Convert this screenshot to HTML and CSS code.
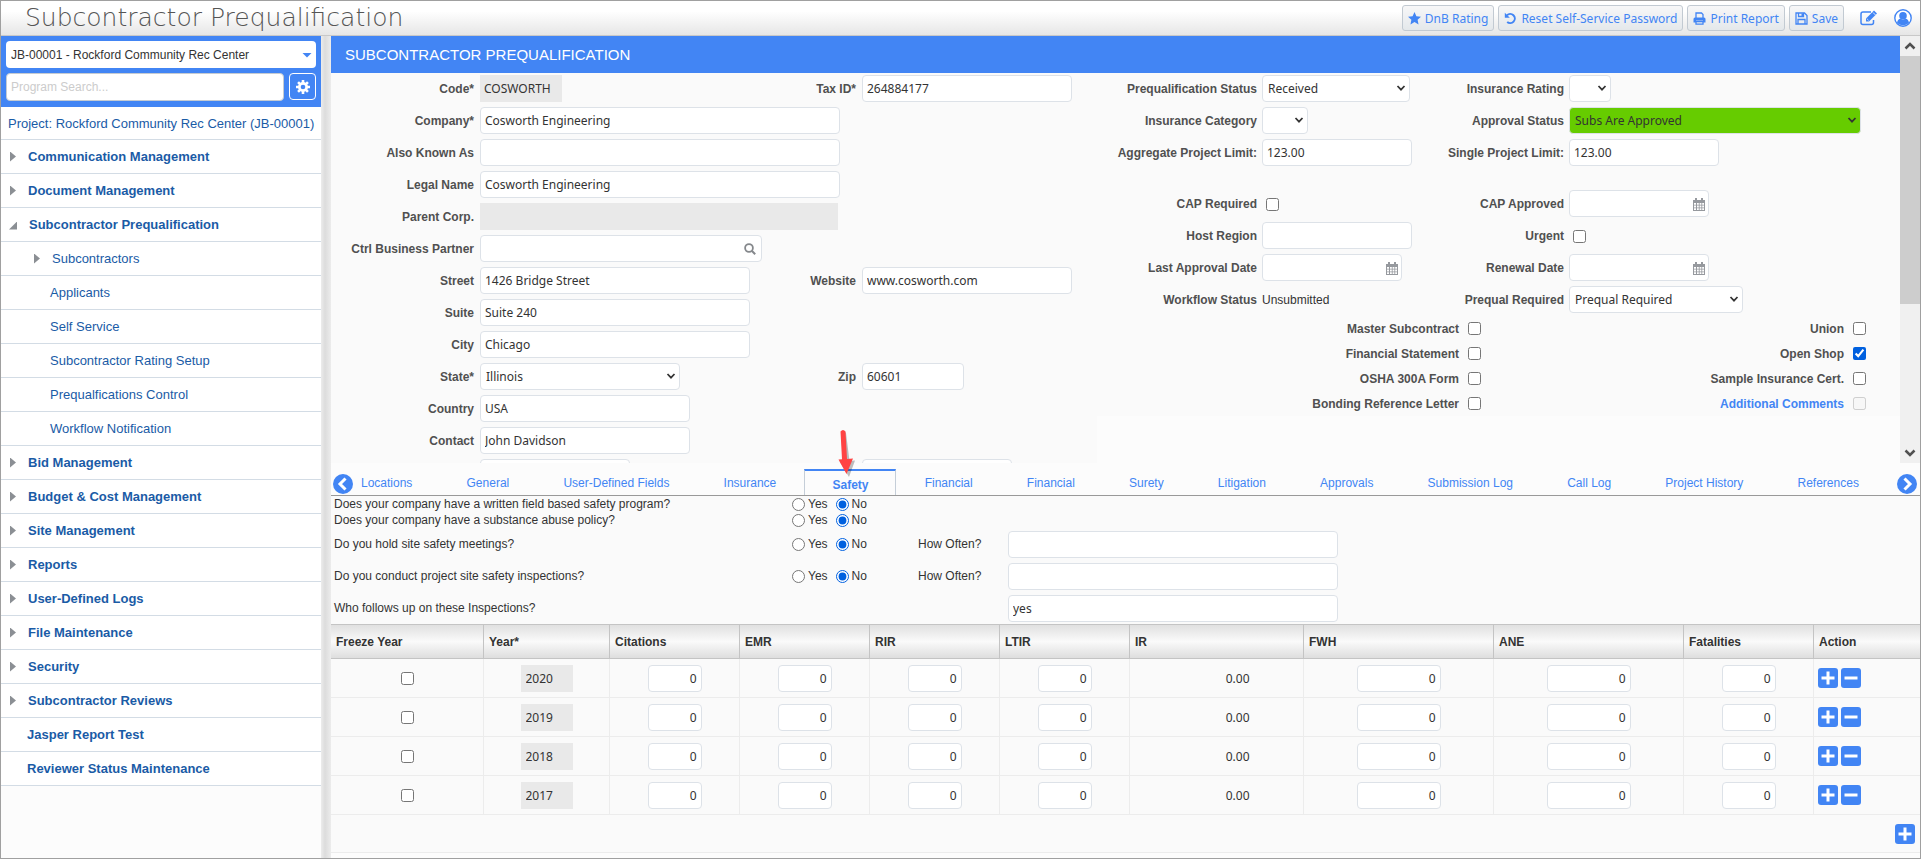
FILE: index.html
```html
<!DOCTYPE html>
<html lang="en">
<head>
<meta charset="utf-8">
<title>Subcontractor Prequalification</title>
<link rel="stylesheet" href="styles.css">
</head>
<body>
<svg class="sprite" aria-hidden="true">
  <symbol id="chev" viewBox="0 0 10 10"><path d="M1.5 3l3.500 3.700L8.500 3" fill="none" stroke="#333" stroke-width="1.700"/></symbol>
  <symbol id="cal" viewBox="0 0 12 13"><path d="M0 2h12v11H0z" fill="#96999e"/><path d="M2 0h2v3H2zM8 0h2v3H8z" fill="#96999e"/><path d="M1 5h2v1.800H1zM4 5h1.800v1.800H4zM6.600 5h1.800v1.800H6.600zM9.200 5H11v1.800H9.200zM1 7.600h2v1.800H1zM4 7.600h1.800v1.800H4zM6.600 7.600h1.800v1.800H6.600zM9.200 7.600H11v1.800H9.200zM1 10.200h2V12H1zM4 10.200h1.800V12H4zM6.600 10.200h1.800V12H6.600zM9.200 10.200H11V12H9.200z" fill="#fff"/></symbol>
  <symbol id="plus" viewBox="0 0 20 20"><rect width="20" height="20" rx="3" fill="#4285f4"/><path d="M10 3.500v13M3.500 10h13" stroke="#fff" stroke-width="3"/></symbol>
  <symbol id="minus" viewBox="0 0 20 20"><rect width="20" height="20" rx="3" fill="#4285f4"/><path d="M3.500 10h13" stroke="#fff" stroke-width="3"/></symbol>
</svg>
<div class="app">
  <header class="topbar">
    <h1 class="brand">Subcontractor Prequalification</h1>
    <div class="actions">
      <button class="btn"><svg width="13" height="13" viewBox="0 0 13 13"><path d="M6.500 0l1.900 4.200 4.600.5-3.400 3.100.95 4.600L6.500 10.100l-4.050 2.300.95-4.600L0 4.700l4.600-.5z" fill="#4285f4"/></svg>DnB Rating</button>
      <button class="btn"><svg width="13" height="13" viewBox="0 0 13 13"><path d="M3 3.200A4.600 4.600 0 1 1 3.200 10" fill="none" stroke="#4285f4" stroke-width="2"/><path d="M.8.800v5h5z" fill="#4285f4"/></svg>Reset Self-Service Password</button>
      <button class="btn"><svg width="13" height="13" viewBox="0 0 13 13"><path d="M3 6V1h5.500L10 2.500V6M3 9.500h7v2.700H3z" fill="none" stroke="#4285f4" stroke-width="1.300"/><path d="M.5 7q0-1.500 1.500-1.500h9q1.500 0 1.500 1.500v3.500H10v-2H3v2H.5z" fill="#4285f4"/></svg>Print Report</button>
      <button class="btn"><svg width="13" height="13" viewBox="0 0 13 13"><path d="M1 1h8.500L12 3.500V12H1zM3.500 1v3.500h5V1M3 12V7.500h7V12" fill="none" stroke="#4285f4" stroke-width="1.300"/><path d="M6.500 1.500h1.500v2.500H6.500z" fill="#4285f4"/></svg>Save</button>
      <button class="icon-btn edit" aria-label="Edit"><svg width="18" height="16" viewBox="0 0 18 16"><path d="M11 2H3Q1 2 1 4v8.500q0 2 2 2h8.500q2 0 2-2V10" fill="none" stroke="#4285f4" stroke-width="1.500"/><path d="M6 8.500L14 .5l3 3-8 8H6z" fill="#4285f4"/><path d="M7.200 9l1.300 1.300M13 2.500l2.500 2.500" stroke="#fff" stroke-width=".8"/></svg></button>
      <button class="icon-btn" aria-label="Account"><svg width="18" height="18" viewBox="0 0 18 18"><circle cx="9" cy="9" r="8.200" fill="#fff" stroke="#4285f4" stroke-width="1.400"/><circle cx="9" cy="6.800" r="3.800" fill="#4285f4"/><path d="M3 14q.5-4 3.500-4.500Q9 11.500 11.500 9.500 14.500 10 15 14q-6 4.500-12 0z" fill="#4285f4"/></svg></button>
    </div>
  </header>

  <div class="body">
    <aside class="side">
      <div class="side-head">
        <div class="pick job"><select aria-label="Job"><option>JB-00001 - Rockford Community Rec Center</option></select><svg width="10" height="6" viewBox="0 0 10 6"><path d="M.5 1h9L5 5.500z" fill="#4285f4"/></svg></div>
        <div class="search-row">
          <input class="search" type="text" placeholder="Program Search..." aria-label="Program Search">
          <button class="gear" aria-label="Settings"><svg width="14" height="14" viewBox="0 0 14 14"><g fill="#fff"><circle cx="7" cy="7" r="5"/><path d="M5.700 0h2.600v14H5.700zM0 5.700h14v2.600H0z"/><path d="M5.700 0h2.600v14H5.700zM0 5.700h14v2.600H0z" transform="rotate(45 7 7)"/></g><circle cx="7" cy="7" r="2.300" fill="#4285f4"/></svg></button>
        </div>
      </div>
      <nav class="menu">
        <a class="project" href="#">Project: Rockford Community Rec Center (JB-00001)</a>
        <a class="item" href="#"><i class="tri"></i>Communication Management</a>
        <a class="item" href="#"><i class="tri"></i>Document Management</a>
        <a class="item" href="#"><i class="tri open"></i>Subcontractor Prequalification</a>
        <a class="item sub" href="#"><i class="tri"></i>Subcontractors</a>
        <a class="item sub" href="#"><i class="none"></i>Applicants</a>
        <a class="item sub" href="#"><i class="none"></i>Self Service</a>
        <a class="item sub" href="#"><i class="none"></i>Subcontractor Rating Setup</a>
        <a class="item sub" href="#"><i class="none"></i>Prequalfications Control</a>
        <a class="item sub" href="#"><i class="none"></i>Workflow Notification</a>
        <a class="item" href="#"><i class="tri"></i>Bid Management</a>
        <a class="item" href="#"><i class="tri"></i>Budget &amp; Cost Management</a>
        <a class="item" href="#"><i class="tri"></i>Site Management</a>
        <a class="item" href="#"><i class="tri"></i>Reports</a>
        <a class="item" href="#"><i class="tri"></i>User-Defined Logs</a>
        <a class="item" href="#"><i class="tri"></i>File Maintenance</a>
        <a class="item" href="#"><i class="tri"></i>Security</a>
        <a class="item" href="#"><i class="tri"></i>Subcontractor Reviews</a>
        <a class="item" href="#"><i class="none"></i>Jasper Report Test</a>
        <a class="item" href="#"><i class="none"></i>Reviewer Status Maintenance</a>
      </nav>
    </aside>
    <div class="splitter"></div>

    <main class="main">
      <div class="upper">
        <div class="upper-content">
          <h2 class="title">SUBCONTRACTOR PREQUALIFICATION</h2>
          <div class="forms">
            <div class="form left">
              <label for="code">Code*</label><div><input id="code" class="ro w-code" value="COSWORTH" readonly></div>
              <label for="tax">Tax ID*</label><div><input id="tax" class="w210" value="264884177"></div>
              <label for="company">Company*</label><div class="wide"><input id="company" class="w360" value="Cosworth Engineering"></div>
              <label for="aka">Also Known As</label><div class="wide"><input id="aka" class="w360"></div>
              <label for="legal">Legal Name</label><div class="wide"><input id="legal" class="w360" value="Cosworth Engineering"></div>
              <label for="parent">Parent Corp.</label><div class="wide"><input id="parent" class="ro w358" readonly></div>
              <label for="partner">Ctrl Business Partner</label><div class="wide"><span class="pick find w282"><input id="partner"><svg width="12" height="12" viewBox="0 0 12 12"><circle cx="5" cy="5" r="3.900" fill="none" stroke="#85888c" stroke-width="1.800"/><path d="M8 8l3.200 3.200" stroke="#85888c" stroke-width="2"/></svg></span></div>
              <label for="street">Street</label><div><input id="street" class="w270" value="1426 Bridge Street"></div>
              <label for="web">Website</label><div><input id="web" class="w210" value="www.cosworth.com"></div>
              <label for="suite">Suite</label><div class="wide"><input id="suite" class="w270" value="Suite 240"></div>
              <label for="city">City</label><div class="wide"><input id="city" class="w270" value="Chicago"></div>
              <label for="state">State*</label><div><span class="pick w200"><select id="state"><option>Illinois</option></select><svg width="10" height="10"><use href="#chev"/></svg></span></div>
              <label for="zip">Zip</label><div><input id="zip" class="w102" value="60601"></div>
              <label for="country">Country</label><div class="wide"><input id="country" class="w210" value="USA"></div>
              <label for="contact">Contact</label><div class="wide"><input id="contact" class="w210" value="John Davidson"></div>
              <span></span><div><input class="w150" aria-label="Phone"></div>
              <span></span><div><input class="w150" aria-label="Fax"></div>
            </div>

            <div class="right">
              <div class="form status">
                <label for="pstat">Prequalification Status</label><div><span class="pick w148"><select id="pstat"><option>Received</option></select><svg width="10" height="10"><use href="#chev"/></svg></span></div>
                <label for="irate">Insurance Rating</label><div><span class="pick w42"><select id="irate"><option></option></select><svg width="10" height="10"><use href="#chev"/></svg></span></div>
                <label for="icat">Insurance Category</label><div><span class="pick w46"><select id="icat"><option></option></select><svg width="10" height="10"><use href="#chev"/></svg></span></div>
                <label for="astat">Approval Status</label><div><span class="pick green w292"><select id="astat"><option>Subs Are Approved</option></select><svg width="10" height="10"><use href="#chev"/></svg></span></div>
                <label for="agg">Aggregate Project Limit:</label><div><input id="agg" class="w150" value="123.00"></div>
                <label for="single">Single Project Limit:</label><div><input id="single" class="w150" value="123.00"></div>
              </div>
              <div class="form status second">
                <label for="capr">CAP Required</label><div><input id="capr" type="checkbox"></div>
                <label for="capa">CAP Approved</label><div><span class="pick w140"><input id="capa"><svg width="12" height="13"><use href="#cal"/></svg></span></div>
                <label for="host">Host Region</label><div><input id="host" class="w150"></div>
                <label for="urgent">Urgent</label><div><input id="urgent" type="checkbox"></div>
                <label for="lad">Last Approval Date</label><div><span class="pick w140"><input id="lad"><svg width="12" height="13"><use href="#cal"/></svg></span></div>
                <label for="ren">Renewal Date</label><div><span class="pick w140"><input id="ren"><svg width="12" height="13"><use href="#cal"/></svg></span></div>
                <label>Workflow Status</label><div><span class="plain">Unsubmitted</span></div>
                <label for="preq">Prequal Required</label><div><span class="pick w174"><select id="preq"><option>Prequal Required</option></select><svg width="10" height="10"><use href="#chev"/></svg></span></div>
              </div>
              <div class="form checks">
                <label for="c1">Master Subcontract</label><input id="c1" type="checkbox">
                <label for="c2">Union</label><input id="c2" type="checkbox">
                <label for="c3">Financial Statement</label><input id="c3" type="checkbox">
                <label for="c4">Open Shop</label><input id="c4" type="checkbox" checked>
                <label for="c5">OSHA 300A Form</label><input id="c5" type="checkbox">
                <label for="c6">Sample Insurance Cert.</label><input id="c6" type="checkbox">
                <label for="c7">Bonding Reference Letter</label><input id="c7" type="checkbox">
                <label for="c8"><a href="#">Additional Comments</a></label><input id="c8" type="checkbox" disabled>
              </div>
            </div>
          </div>
        </div>
        <div class="scroll">
          <svg width="20" height="20" viewBox="0 0 20 20"><path d="M5.500 12.500L10 8l4.500 4.500" fill="none" stroke="#505050" stroke-width="2.500"/></svg>
          <div class="track"><div class="thumb"></div></div>
          <svg width="20" height="20" viewBox="0 0 20 20"><path d="M5.500 7.500L10 12l4.500-4.500" fill="none" stroke="#505050" stroke-width="2.500"/></svg>
        </div>
      </div>

      <div class="tabs">
        <button class="round" aria-label="Previous tabs"><svg width="20" height="20" viewBox="0 0 20 20"><circle cx="10" cy="10" r="10" fill="#4285f4"/><path d="M12.500 4.500L7 10l5.500 5.500" fill="none" stroke="#fff" stroke-width="3"/></svg></button>
        <div class="tablist">
          <a href="#">Locations</a><a href="#">General</a><a href="#">User-Defined Fields</a><a href="#">Insurance</a>
          <a href="#" class="active">Safety<svg class="pointer" width="26" height="54" viewBox="0 0 26 54"><path d="M7 3q3-2.500 5 0l3.500 28 5.500-.5L15 47 5.500 31.500 9 31z" transform="translate(1 2)" fill="#000" opacity=".25"/><path d="M7.500 3.500q2.500-3 5 0l1.500 27.500 6-.5L13.500 46 5.500 31.500l3.500-.3z" fill="#ff4343"/></svg></a>
          <a href="#">Financial</a><a href="#">Financial</a><a href="#">Surety</a><a href="#">Litigation</a><a href="#">Approvals</a><a href="#">Submission Log</a><a href="#">Call Log</a><a href="#">Project History</a><a href="#">References</a>
        </div>
        <button class="round" aria-label="Next tabs"><svg width="20" height="20" viewBox="0 0 20 20"><circle cx="10" cy="10" r="10" fill="#4285f4"/><path d="M7.500 4.500L13 10l-5.500 5.500" fill="none" stroke="#fff" stroke-width="3"/></svg></button>
      </div>

      <section class="questions">
        <div class="q"><span>Does your company have a written field based safety program?</span><span class="yn"><label><input type="radio" name="q1">Yes</label><label><input type="radio" name="q1" checked>No</label></span></div>
        <div class="q"><span>Does your company have a substance abuse policy?</span><span class="yn"><label><input type="radio" name="q2">Yes</label><label><input type="radio" name="q2" checked>No</label></span></div>
        <div class="q tall"><span>Do you hold site safety meetings?</span><span class="yn"><label><input type="radio" name="q3">Yes</label><label><input type="radio" name="q3" checked>No</label></span><label for="h1">How Often?</label><input id="h1" class="w330"></div>
        <div class="q tall"><span>Do you conduct project site safety inspections?</span><span class="yn"><label><input type="radio" name="q4">Yes</label><label><input type="radio" name="q4" checked>No</label></span><label for="h2">How Often?</label><input id="h2" class="w330"></div>
        <div class="q tall"><label for="who">Who follows up on these Inspections?</label><span></span><span></span><input id="who" class="w330" value="yes"></div>
      </section>

      <table class="grid">
        <colgroup><col class="c153"><col class="c126"><col class="c130"><col class="c130"><col class="c130"><col class="c130"><col class="c174"><col class="c190"><col class="c190"><col class="c130"><col></colgroup>
        <thead><tr><th>Freeze Year</th><th>Year*</th><th>Citations</th><th>EMR</th><th>RIR</th><th>LTIR</th><th>IR</th><th>FWH</th><th>ANE</th><th>Fatalities</th><th>Action</th></tr></thead>
        <tbody>
          <tr><td><input type="checkbox" aria-label="Freeze 2020"></td><td><input class="ro yr" value="2020" readonly aria-label="Year"></td><td><input class="n" value="0" aria-label="Citations"></td><td><input class="n" value="0" aria-label="EMR"></td><td><input class="n" value="0" aria-label="RIR"></td><td><input class="n" value="0" aria-label="LTIR"></td><td><span class="ir">0.00</span></td><td><input class="n big" value="0" aria-label="FWH"></td><td><input class="n big" value="0" aria-label="ANE"></td><td><input class="n" value="0" aria-label="Fatalities"></td><td class="act"><button aria-label="Add row"><svg width="20" height="20"><use href="#plus"/></svg></button><button aria-label="Remove row"><svg width="20" height="20"><use href="#minus"/></svg></button></td></tr>
          <tr><td><input type="checkbox" aria-label="Freeze 2019"></td><td><input class="ro yr" value="2019" readonly aria-label="Year"></td><td><input class="n" value="0" aria-label="Citations"></td><td><input class="n" value="0" aria-label="EMR"></td><td><input class="n" value="0" aria-label="RIR"></td><td><input class="n" value="0" aria-label="LTIR"></td><td><span class="ir">0.00</span></td><td><input class="n big" value="0" aria-label="FWH"></td><td><input class="n big" value="0" aria-label="ANE"></td><td><input class="n" value="0" aria-label="Fatalities"></td><td class="act"><button aria-label="Add row"><svg width="20" height="20"><use href="#plus"/></svg></button><button aria-label="Remove row"><svg width="20" height="20"><use href="#minus"/></svg></button></td></tr>
          <tr><td><input type="checkbox" aria-label="Freeze 2018"></td><td><input class="ro yr" value="2018" readonly aria-label="Year"></td><td><input class="n" value="0" aria-label="Citations"></td><td><input class="n" value="0" aria-label="EMR"></td><td><input class="n" value="0" aria-label="RIR"></td><td><input class="n" value="0" aria-label="LTIR"></td><td><span class="ir">0.00</span></td><td><input class="n big" value="0" aria-label="FWH"></td><td><input class="n big" value="0" aria-label="ANE"></td><td><input class="n" value="0" aria-label="Fatalities"></td><td class="act"><button aria-label="Add row"><svg width="20" height="20"><use href="#plus"/></svg></button><button aria-label="Remove row"><svg width="20" height="20"><use href="#minus"/></svg></button></td></tr>
          <tr><td><input type="checkbox" aria-label="Freeze 2017"></td><td><input class="ro yr" value="2017" readonly aria-label="Year"></td><td><input class="n" value="0" aria-label="Citations"></td><td><input class="n" value="0" aria-label="EMR"></td><td><input class="n" value="0" aria-label="RIR"></td><td><input class="n" value="0" aria-label="LTIR"></td><td><span class="ir">0.00</span></td><td><input class="n big" value="0" aria-label="FWH"></td><td><input class="n big" value="0" aria-label="ANE"></td><td><input class="n" value="0" aria-label="Fatalities"></td><td class="act"><button aria-label="Add row"><svg width="20" height="20"><use href="#plus"/></svg></button><button aria-label="Remove row"><svg width="20" height="20"><use href="#minus"/></svg></button></td></tr>
        </tbody>
      </table>
      <div class="grid-foot"><button aria-label="Add year"><svg width="20" height="20"><use href="#plus"/></svg></button></div>
    </main>
  </div>
</div>
</body>
</html>
```

FILE: styles.css
```css
* { box-sizing: border-box; }
body { margin: 0; font-family: "Liberation Sans", Arial, sans-serif; font-size: 12px; color: #333; }
a { text-decoration: none; color: #4285f4; }
button { margin: 0; padding: 0; border: 0; background: none; font: inherit; }
svg { display: block; flex: none; }
.sprite { position: absolute; width: 0; height: 0; }

.app { display: flex; flex-direction: column; min-height: 100vh; border: 1px solid #a0a0a0; background: #fcfcfc; }

/* top bar */
.topbar { display: flex; align-items: center; justify-content: space-between; height: 35px; padding: 0 8px 0 24px; border-bottom: 1px solid #c8c8c8; background: linear-gradient(#fff 30%, #e6e6e6); }
.brand { margin: 0; font-family: "DejaVu Sans", sans-serif; font-weight: 200; font-size: 25px; line-height: 32px; color: #555; }
.actions { display: flex; align-items: center; gap: 4px; }
.btn { display: flex; align-items: center; gap: 4px; height: 26px; padding: 0 5px; border: 1px solid #c2cad2; border-radius: 3px; background: linear-gradient(#f7f7f8, #e4e8eb); font-family: "Noto Sans", sans-serif; font-size: 12px; color: #4285f4; white-space: nowrap; }
.icon-btn { margin-left: 12px; }

/* shared fields */
input:not([type]), input[type="text"], select { height: 27px; padding: 0 4px; border: 1px solid #dde2e8; border-radius: 4px; background: #fff; font-family: "Noto Sans", sans-serif; font-size: 12px; color: #333; outline: 0; }
select { appearance: none; padding: 0 5px; }
input[type="checkbox"], input[type="radio"] { margin: 0; width: 13px; height: 13px; accent-color: #0060df; flex: none; }
input.ro { border: 0; border-radius: 0; background: #e9e9e9; }
.pick { position: relative; display: block; }
.pick input:not([type]), .pick select { width: 100%; display: block; }
.pick svg { position: absolute; right: 4px; top: 50%; margin-top: -6px; pointer-events: none; }
.find svg { right: 6px; }
.green select { background: #66cc00; }

/* sidebar */
.body { display: flex; flex: 1; }
.side { width: 320px; flex: none; }
.side-head { display: flex; flex-direction: column; gap: 5px; height: 71px; padding: 5px; background: #4285f4; }
.job select { border: 0; font-family: "Liberation Sans", Arial, sans-serif; }
.job svg { margin-top: -3px; }
.search-row { display: flex; gap: 5px; }
input.search { flex: 1; min-width: 0; height: 28px; border: 1px solid #c5cbd2; font-family: "Liberation Sans", Arial, sans-serif; }
.search::placeholder { color: #ccc; }
.gear { display: flex; align-items: center; justify-content: center; width: 27px; height: 27px; border: 1px solid #fff; border-radius: 4px; }
.menu { display: flex; flex-direction: column; }
.menu a { display: flex; align-items: center; height: 34px; border-bottom: 1px solid #d3dce5; background: #fff; color: #1a5ba6; font-size: 13px; white-space: nowrap; }
.menu .project { height: 33px; padding: 0 7px; }
.item { padding-left: 9px; font-weight: bold; }
.menu .sub { padding-left: 33px; font-weight: normal; }
.tri { width: 6px; height: 10px; margin-right: 12px; background: #8b8f94; clip-path: polygon(0 0, 100% 50%, 0 100%); }
.tri.open { width: 8px; height: 8px; margin: 2px 12px 0 -1px; clip-path: polygon(100% 0, 100% 100%, 0 100%); }
.none { width: 17px; }
.sub .none { width: 16px; }
.splitter { width: 10px; flex: none; background: linear-gradient(90deg, #ececec, #dcdcdc 40%, #ececec); }

/* main pane */
.main { flex: 1; min-width: 0; }
.upper { display: flex; height: 427px; }
.upper-content { flex: 1; min-width: 0; overflow: hidden; }
.title { margin: 0; padding: 0 14px; background: #4285f4; color: #fff; font-weight: normal; font-size: 15px; line-height: 37px; }
.forms { display: grid; grid-template-columns: 766fr 803fr; align-items: start; }
.form { display: grid; grid-auto-rows: 32px; align-items: center; background: #fafafa; }
.form label { justify-self: end; padding-right: 6px; font-weight: bold; color: #505050; white-space: nowrap; }
.form > div { display: flex; align-items: center; height: 28px; }
.form > div > input:not([type]), .form > div > .pick { margin-bottom: 1px; }
.form.left { grid-template-columns: 149px 1fr 90px 235px; }
.form .wide { grid-column: span 3; }
.form.status { grid-template-columns: 165px 1fr 120px 331px; }
.form.status label { padding-right: 5px; }
.form.second { padding-top: 19px; }
.form.status input[type="checkbox"] { margin-left: 4px; }
.form.checks { grid-template-columns: 371px 1fr auto 47px; grid-auto-rows: 25px; }
.form.checks label { padding-right: 9px; }
.scroll { display: flex; flex-direction: column; width: 20px; background: #f0f0f0; }
.track { flex: 1; }
.thumb { height: 64%; background: #cdcdcd; }
.w-code { width: 82px; }
.w42 { width: 42px; }
.w46 { width: 46px; }
.w102 { width: 102px; }
.w140 { width: 140px; }
.w148 { width: 148px; }
.w150 { width: 150px; }
.w174 { width: 174px; }
.w200 { width: 200px; }
.w210 { width: 210px; }
.w270 { width: 270px; }
.w282 { width: 282px; }
.w292 { width: 292px; }
.w330 { width: 330px; }
.w358 { width: 358px; }
.w360 { width: 360px; }

/* tabs */
.tabs { display: flex; align-items: flex-end; height: 33px; border-bottom: 1px solid #999; padding: 0 3px 0 2px; }
.round { position: relative; z-index: 1; margin-bottom: 1px; }
.tablist { flex: 1; display: flex; justify-content: space-between; margin: 0 12px 0 -18px; }
.tablist a { position: relative; height: 26px; padding: 0 26px; line-height: 28px; white-space: nowrap; }
.tablist .active { padding: 0 27px; border: 1px solid #c5ced8; border-top: 2px solid #4285f4; border-bottom: 0; background: #fcfcfc; font-weight: bold; }
.pointer { position: absolute; left: 28px; top: -43px; }

/* safety questions */
.questions { background: #fafafa; }
.q { display: grid; grid-template-columns: 458px 126px 90px 1fr; align-items: center; height: 16px; padding-left: 3px; }
.q.tall { height: 32px; }
.yn { display: flex; gap: 8px; }
.yn label { display: flex; align-items: center; gap: 3px; }

/* yearly grid */
.grid { width: 100%; border-collapse: separate; border-spacing: 0; table-layout: fixed; background: #fafafa; }
.c126 { width: 126px; }
.c130 { width: 130px; }
.c153 { width: 153px; }
.c174 { width: 174px; }
.c190 { width: 190px; }
.grid th { height: 35px; padding: 0 5px; border: solid #c4c4c4; border-width: 1px 1px 1px 0; background: linear-gradient(#e0e0e0, #fafafa 50%, #dedede); text-align: left; color: #333; }
.grid td { height: 39px; padding: 0; border: solid #ececec; border-width: 0 1px 1px 0; text-align: center; vertical-align: middle; }
.grid th:last-child, .grid td:last-child { border-right: 0; }
.grid td > input:not([type]), .ir { display: block; margin: 0 auto; }
.grid td > input[type="checkbox"] { display: block; margin: 0 auto; }
.grid .yr { width: 52px; padding: 0 5px; }
.grid .n { width: 54px; text-align: right; }
.grid .big, .grid .ir { width: 84px; }
.grid .ir { padding-right: 9px; text-align: right; font-family: "Noto Sans", sans-serif; }
.act button { float: left; margin-left: 3px; }
.act button:first-child { margin-left: 4px; }
.grid-foot { display: flex; align-items: center; justify-content: flex-end; height: 38px; padding-right: 5px; border-bottom: 1px solid #ececec; background: #fafafa; }
```
